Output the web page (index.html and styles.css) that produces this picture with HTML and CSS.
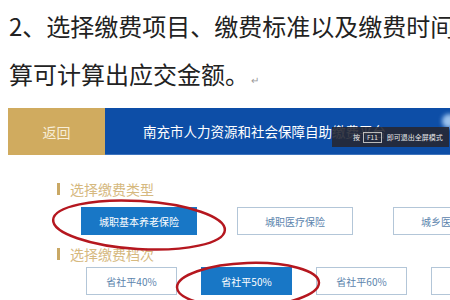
FILE: index.html
```html
<!DOCTYPE html>
<html lang="zh">
<head>
<meta charset="utf-8">
<link rel="stylesheet" href="styles.css">
</head>
<body>
<div class="page">
  <div class="doc">
    <p class="line">2、选择缴费项目、缴费标准以及缴费时间，点击计</p>
    <p class="line">算可计算出应交金额。<span class="ret">↵</span></p>
  </div>
  <div class="header">
    <div class="back">返回</div>
    <div class="title">南充市人力资源和社会保障自助缴费平台</div>
    <span class="glow"></span>
    <div class="tip">按<span class="key">F11</span>即可退出全屏模式</div>
  </div>
  <div class="section">
    <div class="heading"><span class="mark"></span>选择缴费类型</div>
    <div class="row row1">
      <div class="btn on">城职基本养老保险</div>
      <div class="btn">城职医疗保险</div>
      <div class="btn">城乡医疗保险</div>
    </div>
    <div class="heading h2"><span class="mark"></span>选择缴费档次</div>
    <div class="row row2">
      <div class="btn">省社平40%</div>
      <div class="btn on">省社平50%</div>
      <div class="btn">省社平60%</div>
      <div class="btn">省社平70%</div>
    </div>
  </div>
  <svg class="marks" width="450" height="300" viewBox="0 0 450 300">
    <ellipse cx="139" cy="225" rx="86" ry="24" transform="rotate(3.5 139 225)" fill="none" stroke="#b5171f" stroke-width="2.5"/>
    <ellipse cx="248" cy="285" rx="71" ry="22" transform="rotate(-2 248 285)" fill="none" stroke="#b5171f" stroke-width="2.5"/>
  </svg>
</div>
</body>
</html>
```
FILE: styles.css
```css
html, body {
  margin: 0;
  padding: 0;
  background: #fff;
  overflow: hidden;
}
.page {
  position: relative;
  width: 450px;
  height: 300px;
  overflow: hidden;
  font-family: "Noto Sans CJK SC", "Noto Sans", sans-serif;
}
.doc {
  padding: 2px 0 0 9px;
}
.line {
  margin: 0;
  height: 48px;
  font-size: 24px;
  line-height: 48px;
  color: #222;
  white-space: nowrap;
}
.ret {
  font-size: 10px;
  line-height: 0;
  color: #999;
  margin-left: 2px;
}
.header {
  position: relative;
  display: flex;
  height: 47px;
  margin: 10px 0 0 8px;
}
.back {
  width: 97px;
  flex-shrink: 0;
  background: #d0ab5f;
  color: #f8eed8;
  font-size: 14px;
  display: flex;
  align-items: center;
  justify-content: center;
}
.title {
  flex: 1;
  background: #0d4ea7;
  color: #fff;
  font-size: 13.5px;
  padding-left: 38px;
  display: flex;
  align-items: center;
  white-space: nowrap;
  overflow: hidden;
  border-bottom: 1px solid #3d73bd;
}
.glow {
  position: absolute;
  right: -6px;
  top: 6px;
  width: 14px;
  height: 14px;
  border-radius: 50%;
  background: #9cc3ee;
  filter: blur(2px);
}
.tip {
  position: absolute;
  left: 324px;
  top: 19px;
  width: 117px;
  height: 20px;
  background: rgba(38, 40, 52, 0.9);
  color: #e8e8e8;
  font-size: 7px;
  display: flex;
  align-items: center;
  padding-left: 21px;
  box-sizing: border-box;
  white-space: nowrap;
}
.key {
  display: inline-block;
  border: 1px solid #bbb;
  padding: 0 3px;
  margin: 0 5px 0 3px;
  line-height: 9px;
  font-size: 6.5px;
}
.section {
  padding-top: 24px;
}
.heading {
  display: flex;
  align-items: center;
  height: 20px;
  padding-left: 57px;
  font-size: 14px;
  color: #d6b97f;
}
.mark {
  width: 3px;
  height: 12px;
  background: #c9a865;
  margin-right: 10px;
}
.h2 {
  margin-top: 9px;
}
.row {
  display: flex;
}
.row1 {
  margin-top: 8px;
  padding-left: 81px;
  gap: 40px;
}
.row2 {
  margin-top: 3px;
  padding-left: 86px;
  gap: 24px;
}
.btn {
  flex-shrink: 0;
  height: 28px;
  box-sizing: border-box;
  border: 1px solid #b3c6d8;
  color: #5b84ad;
  font-size: 10px;
  display: flex;
  align-items: center;
  justify-content: center;
  background: #fff;
}
.row1 .btn {
  width: 116px;
}
.row2 .btn {
  width: 91px;
}
.btn.on {
  background: #1877c6;
  border-color: #1877c6;
  color: #fff;
}
.marks {
  position: absolute;
  left: 0;
  top: 0;
  pointer-events: none;
}
```
